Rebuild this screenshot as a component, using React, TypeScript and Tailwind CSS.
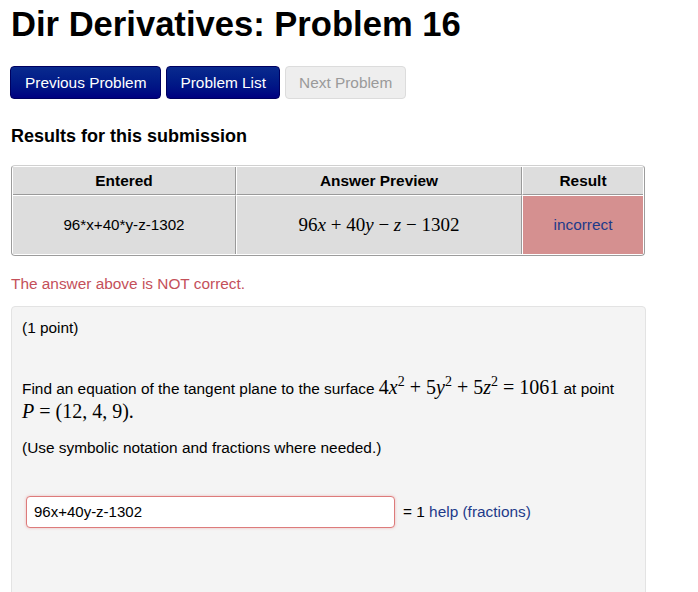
import React from "react";

const serif = { fontFamily: '"Liberation Serif", "Times New Roman", serif' };

function V({ c }: { c: string }) {
  return <i className="italic">{c}</i>;
}

function Sup({ c }: { c: string }) {
  return <sup className="text-[14px] -top-[0.55em]">{c}</sup>;
}

export default function App() {
  return (
    <div className="min-h-[592px] bg-white font-['Liberation_Sans',Arial,sans-serif] text-black pl-[11px] overflow-hidden">
      <h1 className="text-[34.6px] leading-[40px] font-bold mt-[4px]">
        Dir Derivatives: Problem 16
      </h1>

      <div className="flex mt-[22px] -ml-px">
        <button className="h-[33px] px-[14px] rounded-[4px] text-[15.4px] text-white bg-gradient-to-b from-[#0a2a8e] to-[#000080] border border-[#000060]">
          Previous Problem
        </button>
        <button className="ml-[5px] h-[33px] px-[13px] rounded-[4px] text-[15.4px] text-white bg-gradient-to-b from-[#0a2a8e] to-[#000080] border border-[#000060]">
          Problem List
        </button>
        <button className="ml-[5px] h-[33px] px-[13px] rounded-[4px] text-[15.4px] text-[#9a9a9a] bg-[#eeeeee] border border-[#dcdcdc]">
          Next Problem
        </button>
      </div>

      <h2 className="text-[18px] leading-[22px] font-bold mt-[26px]">Results for this submission</h2>

      <div className="mt-[18px] w-[634px] border border-[#9c9c9c] border-t-[#d0d0d0] rounded-[4px] overflow-hidden bg-white p-px">
        <div className="grid grid-cols-[223px_286px_1fr] text-[15.4px]">
          <div className="h-[28px] flex items-center justify-center font-bold bg-[#dddddd] border-r border-b border-[#9a9a9a]">Entered</div>
          <div className="h-[28px] flex items-center justify-center font-bold bg-[#dddddd] border-r border-b border-l border-[#9a9a9a] border-l-white">Answer Preview</div>
          <div className="h-[28px] flex items-center justify-center font-bold bg-[#dddddd] border-b border-l border-[#9a9a9a] border-l-white">Result</div>
          <div className="h-[59px] flex items-center justify-center text-[15.2px] bg-[#dddddd] border-r border-t border-[#9a9a9a] border-t-white">96*x+40*y-z-1302</div>
          <div className="h-[59px] flex items-center justify-center bg-[#dddddd] border-r border-l border-t border-[#9a9a9a] border-l-white border-t-white text-[19px]" style={serif}>
            <span>96<V c="x" /> + 40<V c="y" /> − <V c="z" /> − 1302</span>
          </div>
          <div className="h-[59px] flex items-center justify-center text-[15.4px] text-[#1e3a8a] bg-[#d59090] border-l border-t border-[#9a9a9a] border-l-white border-t-white">incorrect</div>
        </div>
      </div>

      <p className="text-[15.4px] leading-[20px] text-[#c4505a] mt-[18px]">The answer above is NOT correct.</p>

      <div className="mt-[12px] w-[635px] h-[300px] bg-[#f4f4f4] border border-[#e3e3e3] rounded-[4px] px-[10px] pt-[11px] text-[15.4px]">
        <p className="leading-[20px]">(1 point)</p>
        <div className="mt-[38px] leading-[22px]">
          <p>
            Find an equation of the tangent plane to the surface{" "}
            <span className="text-[20px]" style={serif}>
              4<V c="x" /><Sup c="2" /> + 5<V c="y" /><Sup c="2" /> + 5<V c="z" /><Sup c="2" /> = 1061
            </span>{" "}
            at point
            <br />
            <span className="text-[20px]" style={serif}>
              <V c="P" /> = (12,  4,  9)
            </span>
            <span className="text-[20px]" style={serif}>.</span>
          </p>
        </div>
        <p className="mt-[14px] leading-[20px]">(Use symbolic notation and fractions where needed.)</p>
        <div className="mt-[38px] flex items-center gap-[8px]">
          <div className="ml-[4px] w-[369px] h-[32px] bg-white border border-[#dd7b7b] rounded-[4px] shadow-[0_0_3px_rgba(220,80,80,0.35)] flex items-center px-[7px] text-[15px]">
            96x+40y-z-1302
          </div>
          <span className="text-[15.4px]">
            = 1 <span className="text-[#1e3a8a]">help (fractions)</span>
          </span>
        </div>
      </div>
    </div>
  );
}
